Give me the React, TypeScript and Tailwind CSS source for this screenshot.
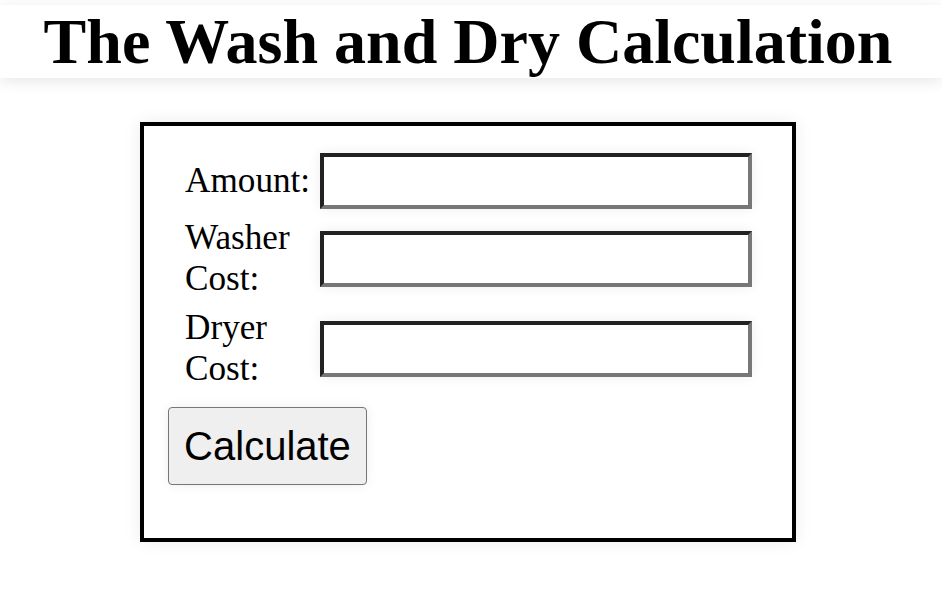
const fields = [
  { id: "amount", label: "Amount:" },
  { id: "washer", label: "Washer Cost:" },
  { id: "dryer", label: "Dryer Cost:" },
];

const App = () => {
  return (
    <div className="min-h-[602px] bg-white pt-[5px] font-['Liberation_Serif',serif] text-black">
      {/* Header */}
      <header className="bg-white shadow-[0_3px_14px_rgba(0,0,0,0.1)]">
        <h1 className="pr-[6px] text-center text-[64px] font-bold leading-[73px]">
          The Wash and Dry Calculation
        </h1>
      </header>

      {/* Form box */}
      <div className="pr-[6px] pt-[44px]">
        <div className="mx-auto w-[656px] border-4 border-black bg-white pt-[27px] pb-[53px] shadow-[0_0_16px_rgba(0,0,0,0.08)]">
          <div className="grid grid-cols-[126px_432px] items-center gap-x-[9px] gap-y-[9px] pl-[41px]">
            {fields.map((f) => (
              <div key={f.id} className="contents">
                <label
                  htmlFor={f.id}
                  className="text-[35.2px] leading-[40.5px]"
                >
                  {f.label}
                </label>
                <input
                  id={f.id}
                  type="text"
                  className="h-[56px] w-[432px] border-4 border-t-[#222] border-l-[#222] border-b-[#777] border-r-[#777] bg-white shadow-[0_0_12px_rgba(0,0,0,0.07)] outline-none"
                />
              </div>
            ))}
          </div>

          <button
            type="button"
            className="ml-[24px] mt-[18px] h-[78px] w-[199px] rounded-[4px] border-[1.5px] border-[#767676] bg-[#efefef] font-['Liberation_Sans',Arial,sans-serif] text-[40px] leading-[46px] shadow-[0_0_12px_rgba(0,0,0,0.07)]"
          >
            Calculate
          </button>
        </div>
      </div>
    </div>
  );
};

export default App;
